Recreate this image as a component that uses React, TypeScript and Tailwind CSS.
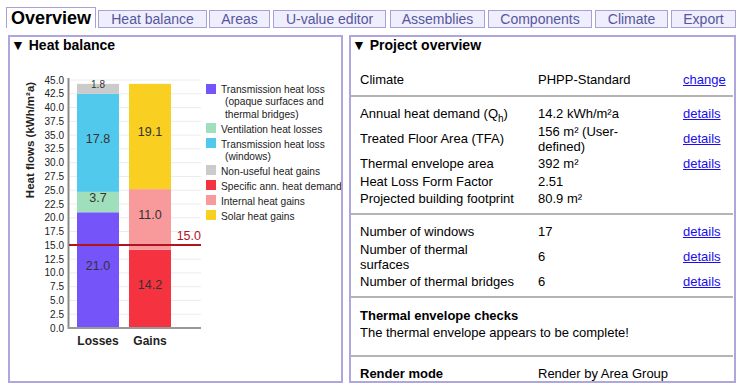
import React from "react";

const Y0 = 328;
const K = 248 / 45;
const yv = (v: number) => Y0 - v * K;

type Seg = { v: number; c: string; fs?: number };

function Bar({ x, segs }: { x: number; segs: Seg[] }) {
  let acc = 0;
  return (
    <g>
      {segs.map((s, i) => {
        const top = yv(acc + s.v);
        const bot = yv(acc);
        acc += s.v;
        const mid = (top + bot) / 2;
        return (
          <g key={i}>
            <rect x={x} y={top} width={42} height={bot - top} fill={s.c} />
            <text
              x={x + 21}
              y={s.fs ? mid - 1 : mid}
              textAnchor="middle"
              fontSize={s.fs ?? 12.5}
              fill="#333"
            >
              {s.v.toFixed(1)}
            </text>
          </g>
        );
      })}
    </g>
  );
}

function Chart() {
  const ticks: number[] = [];
  for (let i = 0; i <= 18; i++) ticks.push(i * 2.5);
  return (
    <svg width={194} height={310} className="shrink-0" style={{ fontFamily: '"Liberation Sans", Arial, sans-serif' }}>
      <g transform="translate(-10,-53)">
        {ticks.map((t) => (
          <line key={"g" + t} x1={70} x2={201} y1={yv(t)} y2={yv(t)} stroke="#ececec" strokeWidth={1} />
        ))}
        {ticks.map((t) => (
          <text key={"t" + t} x={64} y={yv(t) + 3.5} textAnchor="end" fontSize={10} fill="#222">
            {t.toFixed(1)}
          </text>
        ))}
        <text
          transform="translate(34,140) rotate(-90)"
          textAnchor="middle"
          fontSize={11.5}
          fontWeight="bold"
          fill="#222"
        >
          Heat flows (kWh/m²a)
        </text>
        <Bar
          x={77}
          segs={[
            { v: 21.0, c: "#7554fa" },
            { v: 3.7, c: "#a0dfbb" },
            { v: 17.8, c: "#51c9ec" },
            { v: 1.8, c: "#cbcbcb", fs: 10 },
          ]}
        />
        <Bar
          x={129}
          segs={[
            { v: 14.2, c: "#f5323f" },
            { v: 11.0, c: "#f89a9b" },
            { v: 19.1, c: "#f9cf22" },
          ]}
        />
        <line x1={68.5} x2={68.5} y1={78} y2={329} stroke="#8a8a8a" strokeWidth={2} />
        <line x1={68} x2={201} y1={328} y2={328} stroke="#999" strokeWidth={2} />
        <line x1={69} x2={201} y1={245} y2={245} stroke="#b0141e" strokeWidth={2} />
        <text x={201} y={239.5} textAnchor="end" fontSize={12.5} fill="#b0141e">
          15.0
        </text>
        <text x={98} y={345} textAnchor="middle" fontSize={12} fontWeight="bold" fill="#222">
          Losses
        </text>
        <text x={150} y={345} textAnchor="middle" fontSize={12} fontWeight="bold" fill="#222">
          Gains
        </text>
      </g>
    </svg>
  );
}

const legend: { c: string; lines: string[] }[] = [
  { c: "#7554fa", lines: ["Transmission heat loss", "(opaque surfaces and", "thermal bridges)"] },
  { c: "#a0dfbb", lines: ["Ventilation heat losses"] },
  { c: "#51c9ec", lines: ["Transmission heat loss", "(windows)"] },
  { c: "#cbcbcb", lines: ["Non-useful heat gains"] },
  { c: "#f5323f", lines: ["Specific ann. heat demand"] },
  { c: "#f89a9b", lines: ["Internal heat gains"] },
  { c: "#f9cf22", lines: ["Solar heat gains"] },
];

function Legend() {
  return (
    <div className="ml-[2px] mt-[31px] flex flex-col gap-[2.7px] text-[10.2px] leading-[12.3px] text-[#222]">
      {legend.map((l, i) => (
        <div key={i} className="flex items-start">
          <div className="mt-[-0.5px] h-[10px] w-[10px] shrink-0" style={{ backgroundColor: l.c }} />
          <div className="ml-[5px] whitespace-nowrap">
            {l.lines.map((t, j) => (
              <div key={j} className={j > 0 ? "pl-[4px]" : ""}>
                {t}
              </div>
            ))}
          </div>
        </div>
      ))}
    </div>
  );
}

function Tab({ label, w, ml }: { label: string; w: string; ml: string }) {
  return (
    <div
      className={`${w} ${ml} mt-[3px] h-[18px] border border-[#a9a0da] bg-[#eeeefc] text-center text-[14px] leading-[16px] text-[#56569c]`}
    >
      {label}
    </div>
  );
}

function Row({
  label,
  value,
  link,
  h,
}: {
  label: React.ReactNode;
  value: React.ReactNode;
  link?: string;
  h: string;
}) {
  return (
    <div className={`grid grid-cols-[178px_145px_1fr] items-center ${h}`}>
      <div>{label}</div>
      <div>{value}</div>
      <div>
        {link && <span className="text-[#1a0dee] underline">{link}</span>}
      </div>
    </div>
  );
}

function Sep() {
  return <div className="mr-[1px] h-[2px] bg-[#b4b4b4]" />;
}

export default function App() {
  return (
    <div
      className="relative h-[392px] w-[745px] overflow-hidden bg-white text-black"
      style={{ fontFamily: '"Liberation Sans", Arial, "DejaVu Sans", sans-serif' }}
    >
      {/* Tabs */}
      <div className="flex h-[28px] items-start pl-[6px] pt-[7px]">
        <div className="h-[21px] w-[90px] border border-b-0 border-[#a9a0da] bg-white text-center text-[18px] font-bold leading-[20px]">
          Overview
        </div>
        <Tab label="Heat balance" w="w-[109px]" ml="ml-[2px]" />
        <Tab label="Areas" w="w-[61px]" ml="ml-[2px]" />
        <Tab label="U-value editor" w="w-[113px]" ml="ml-[3px]" />
        <Tab label="Assemblies" w="w-[95px]" ml="ml-[4px]" />
        <Tab label="Components" w="w-[104px]" ml="ml-[3px]" />
        <Tab label="Climate" w="w-[73px]" ml="ml-[3px]" />
        <Tab label="Export" w="w-[65px]" ml="ml-[3px]" />
      </div>

      {/* Panels */}
      <div className="mt-[7px] flex h-[348px] pl-[8px]">
        {/* Left panel */}
        <div className="h-full w-[335px] overflow-hidden border-2 border-[#aea6dc]">
          <div className="pl-[1px] text-[14px] font-bold leading-[16px]">▼ Heat balance</div>
          <div className="flex">
            <Chart />
            <Legend />
          </div>
        </div>

        {/* Right panel */}
        <div className="ml-[6px] h-full w-[387px] overflow-hidden border-2 border-[#aea6dc] text-[13px] leading-[15px]">
          <div className="pl-[1px] text-[14px] font-bold leading-[16px]">▼ Project overview</div>

          <div className="pb-[6.5px] pl-[9px] pt-[17px]">
            <Row label="Climate" value="PHPP-Standard" link="change" h="h-[18px]" />
          </div>
          <Sep />
          <div className="pb-[6px] pl-[9px] pt-[8px]">
            <Row
              label={
                <span>
                  Annual heat demand (Q
                  <span className="relative top-[4px] text-[10px] leading-none">h</span>)
                </span>
              }
              value="14.2 kWh/m²a"
              link="details"
              h="h-[18px]"
            />
            <Row
              label="Treated Floor Area (TFA)"
              value={
                <span>
                  156 m² (User-
                  <br />
                  defined)
                </span>
              }
              link="details"
              h="h-[32px]"
            />
            <Row label="Thermal envelope area" value="392 m²" link="details" h="h-[18px]" />
            <Row label="Heat Loss Form Factor" value="2.51" h="h-[17px]" />
            <Row label="Projected building footprint" value="80.9 m²" h="h-[17px]" />
          </div>
          <Sep />
          <div className="pb-[5px] pl-[9px] pt-[8px]">
            <Row label="Number of windows" value="17" link="details" h="h-[18px]" />
            <Row
              label={
                <span>
                  Number of thermal
                  <br />
                  surfaces
                </span>
              }
              value="6"
              link="details"
              h="h-[32px]"
            />
            <Row label="Number of thermal bridges" value="6" link="details" h="h-[18px]" />
          </div>
          <Sep />
          <div className="pb-[14px] pl-[9px] pt-[9px]">
            <div className="h-[17px] font-bold leading-[17px]">Thermal envelope checks</div>
            <div className="h-[17px] leading-[17px]">The thermal envelope appears to be complete!</div>
          </div>
          <Sep />
          <div className="pl-[9px] pt-[8px]">
            <div className="grid h-[17px] grid-cols-[178px_1fr] items-center">
              <div className="font-bold">Render mode</div>
              <div>Render by Area Group</div>
            </div>
          </div>
        </div>
      </div>
    </div>
  );
}
